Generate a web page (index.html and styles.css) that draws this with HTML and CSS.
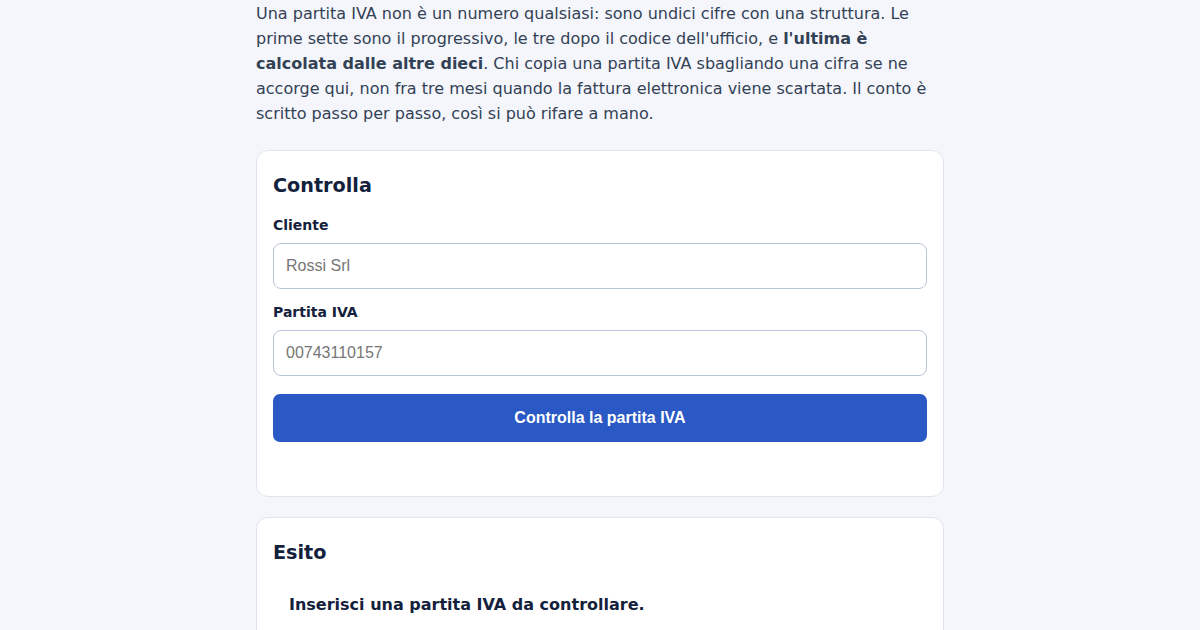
FILE: index.html
```html
<!DOCTYPE html>
<html lang="it">
<head>
<meta charset="utf-8">
<title>Controllo partita IVA</title>
<link rel="stylesheet" href="styles.css">
</head>
<body>
<main class="page">
  <p class="intro">Una partita IVA non è un numero qualsiasi: sono undici cifre con una struttura. Le prime sette sono il progressivo, le tre dopo il codice dell'ufficio, e <strong>l'ultima è calcolata dalle altre dieci</strong>. Chi copia una partita IVA sbagliando una cifra se ne accorge qui, non fra tre mesi quando la fattura elettronica viene scartata. Il conto è scritto passo per passo, così si può rifare a mano.</p>

  <section class="card">
    <h2 class="card-title">Controlla</h2>
    <form class="form">
      <div class="field">
        <label class="label" for="cliente">Cliente</label>
        <input class="input" id="cliente" type="text" placeholder="Rossi Srl">
      </div>
      <div class="field">
        <label class="label" for="piva">Partita IVA</label>
        <input class="input" id="piva" type="text" placeholder="00743110157">
      </div>
      <button class="button" type="button">Controlla la partita IVA</button>
    </form>
  </section>

  <section class="card">
    <h2 class="card-title">Esito</h2>
    <div class="result">Inserisci una partita IVA da controllare.</div>
  </section>
</main>
</body>
</html>
```

FILE: styles.css
```css
* { box-sizing: border-box; }

html, body {
  margin: 0;
  padding: 0;
  background: #f4f6fb;
}

body {
  font-family: "DejaVu Sans", sans-serif;
  color: #334155;
}

.page {
  width: 688px;
  margin: 0 auto;
  padding-top: 1px;
  display: flex;
  flex-direction: column;
  gap: 20px;
}

.intro {
  margin: 0 0 4px;
  font-size: 16px;
  line-height: 25px;
  color: #334155;
}

.intro strong {
  font-weight: bold;
  color: #334155;
}

.card {
  background: #ffffff;
  border: 1px solid #dfe4ef;
  border-radius: 12px;
  padding: 21px 16px 20px;
}

.card-title {
  margin: 0;
  font-size: 19.2px;
  line-height: 28px;
  font-weight: bold;
  color: #14213d;
}

.form {
  display: flex;
  flex-direction: column;
  padding-top: 15px;
  padding-bottom: 34px;
}

.field {
  display: flex;
  flex-direction: column;
  gap: 8px;
  margin-bottom: 13px;
}

.label {
  font-size: 14px;
  line-height: 20px;
  font-weight: bold;
  color: #14213d;
}

.input {
  height: 46px;
  border: 1px solid #b9c3d9;
  border-radius: 8px;
  padding: 0 12px;
  font-family: "Liberation Sans", Arial, sans-serif;
  font-size: 16px;
  color: #14213d;
  background: #ffffff;
}

.input::placeholder {
  color: #767676;
}

.button {
  margin-top: 5px;
  height: 48px;
  border: none;
  border-radius: 7px;
  background: #2a58c4;
  color: #ffffff;
  font-family: "Liberation Sans", Arial, sans-serif;
  font-size: 16px;
  font-weight: bold;
}

.result {
  margin-top: 10px;
  padding: 16px;
  font-size: 16px;
  line-height: 24px;
  font-weight: bold;
  color: #14213d;
}
```
